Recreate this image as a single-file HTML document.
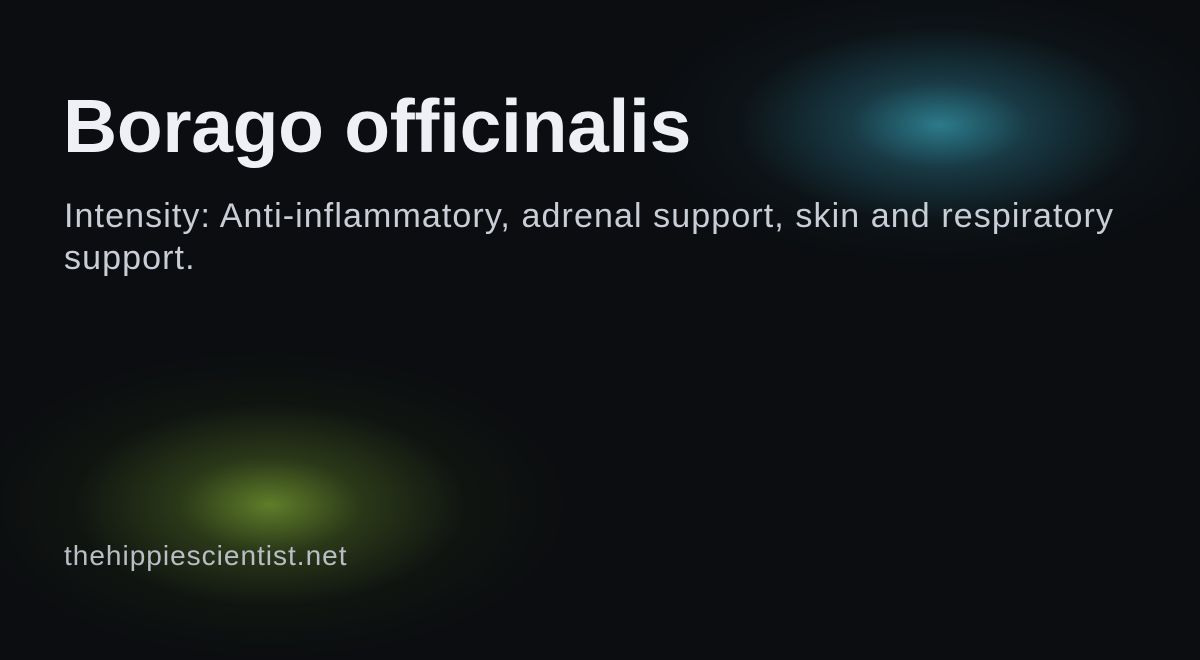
<!DOCTYPE html>
<html><head><meta charset="utf-8"><style>
html,body{margin:0;padding:0}
body{width:1200px;height:630px;overflow:hidden;background:#0b0d10;position:relative;font-family:"Liberation Sans",sans-serif}
.g1{position:absolute;left:640px;top:-20px;width:600px;height:290px;background:radial-gradient(ellipse 50% 50% at 50% 50%,rgba(52,150,170,0.8) 0%,rgba(40,110,130,0.45) 30%,rgba(20,50,60,0.15) 68%,rgba(11,13,16,0) 100%)}
.g2{position:absolute;left:-30px;top:350px;width:600px;height:310px;background:radial-gradient(ellipse 50% 50% at 50% 50%,rgba(110,145,45,0.85) 0%,rgba(80,110,35,0.45) 30%,rgba(40,55,20,0.18) 65%,rgba(11,13,16,0) 100%)}
h1{position:absolute;left:63px;top:83px;margin:0;font-size:75px;font-weight:bold;color:#eef0f5;letter-spacing:-0.3px}
p{position:absolute;left:64px;top:195px;margin:0;width:1100px;font-size:34px;line-height:42px;color:#c9ced6;letter-spacing:1.1px}
.f{position:absolute;left:64px;top:540px;font-size:28px;color:#b9bec6;letter-spacing:1px}
</style></head><body>
<div class="g1"></div><div class="g2"></div>
<h1>Borago officinalis</h1>
<p>Intensity: Anti-inflammatory, adrenal support, skin and respiratory support.</p>
<div class="f">thehippiescientist.net</div>
</body></html>
